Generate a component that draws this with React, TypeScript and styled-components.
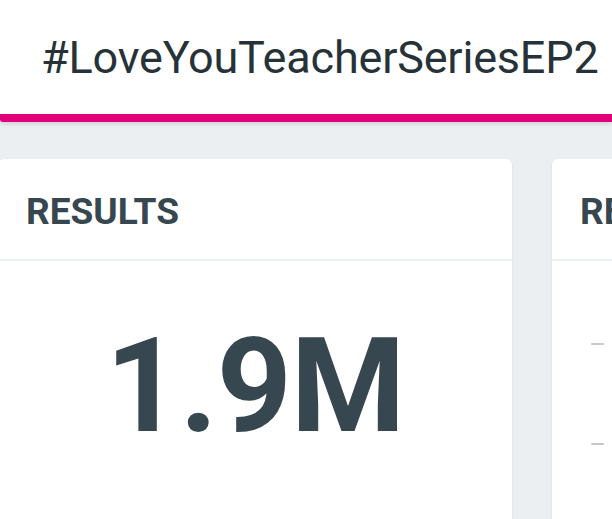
import React from "react";
import styled, { createGlobalStyle } from "styled-components";

const Global = createGlobalStyle`
  html, body { margin: 0; padding: 0; background: #eceff1; }
  body { font-family: Roboto, "Noto Sans", "Liberation Sans", sans-serif; overflow: hidden; width: 612px; height: 519px; }
`;

const Page = styled.div`
  width: 612px;
  height: 519px;
  overflow: hidden;
  background: #eceff1;
  display: flex;
  flex-direction: column;
`;

const Header = styled.header`
  position: relative;
  z-index: 2;
  background: #ffffff;
  border-bottom: 8px solid #e2007a;
  border-bottom-left-radius: 3px;
  box-shadow: 0 2px 4px rgba(0, 0, 0, 0.12);
  height: 114px;
  display: flex;
  align-items: center;
  padding-left: 41px;
  flex-shrink: 0;
`;

const Title = styled.h1`
  margin: 0;
  font-family: Roboto, sans-serif;
  font-weight: 400;
  font-size: 45px;
  color: #263238;
  white-space: nowrap;
  letter-spacing: -0.2px;
`;

const Row = styled.div`
  display: flex;
  gap: 40px;
  margin-top: 37px;
  margin-left: -2px;
  flex: 1;
`;

const Card = styled.section<{ $width: number }>`
  flex: 0 0 ${(p) => p.$width}px;
  background: #ffffff;
  border-radius: 6px 6px 0 0;
  box-shadow: 0 1px 3px rgba(0, 0, 0, 0.08);
  display: flex;
  flex-direction: column;
`;

const CardHeader = styled.div`
  height: 102px;
  box-sizing: border-box;
  border-bottom: 2px solid #eceff1;
  display: flex;
  align-items: center;
  padding-left: 28px;
  padding-top: 4px;
`;

const CardTitle = styled.h2`
  margin: 0;
  font-family: Roboto, sans-serif;
  font-weight: 700;
  font-size: 37px;
  color: #37474f;
  text-transform: uppercase;
  white-space: nowrap;
`;

const BigValue = styled.div`
  font-family: Roboto, sans-serif;
  font-weight: 700;
  font-size: 131px;
  letter-spacing: -1px;
  line-height: 1;
  color: #37474f;
  text-align: center;
  margin-top: 60px;
`;

const DashList = styled.div`
  display: flex;
  flex-direction: column;
  gap: 98px;
  padding-top: 82px;
  padding-left: 39px;
`;

const Dash = styled.span`
  display: block;
  width: 13px;
  height: 2px;
  background: #c4c8cb;
  border-radius: 1px;
`;

export default function App() {
  return (
    <Page>
      <Global />
      <Header>
        <Title>#LoveYouTeacherSeriesEP2</Title>
      </Header>
      <Row>
        <Card $width={514}>
          <CardHeader>
            <CardTitle>Results</CardTitle>
          </CardHeader>
          <BigValue>1.9M</BigValue>
        </Card>
        <Card $width={400}>
          <CardHeader>
            <CardTitle>Reach</CardTitle>
          </CardHeader>
          <DashList>
            <Dash />
            <Dash />
          </DashList>
        </Card>
      </Row>
    </Page>
  );
}
